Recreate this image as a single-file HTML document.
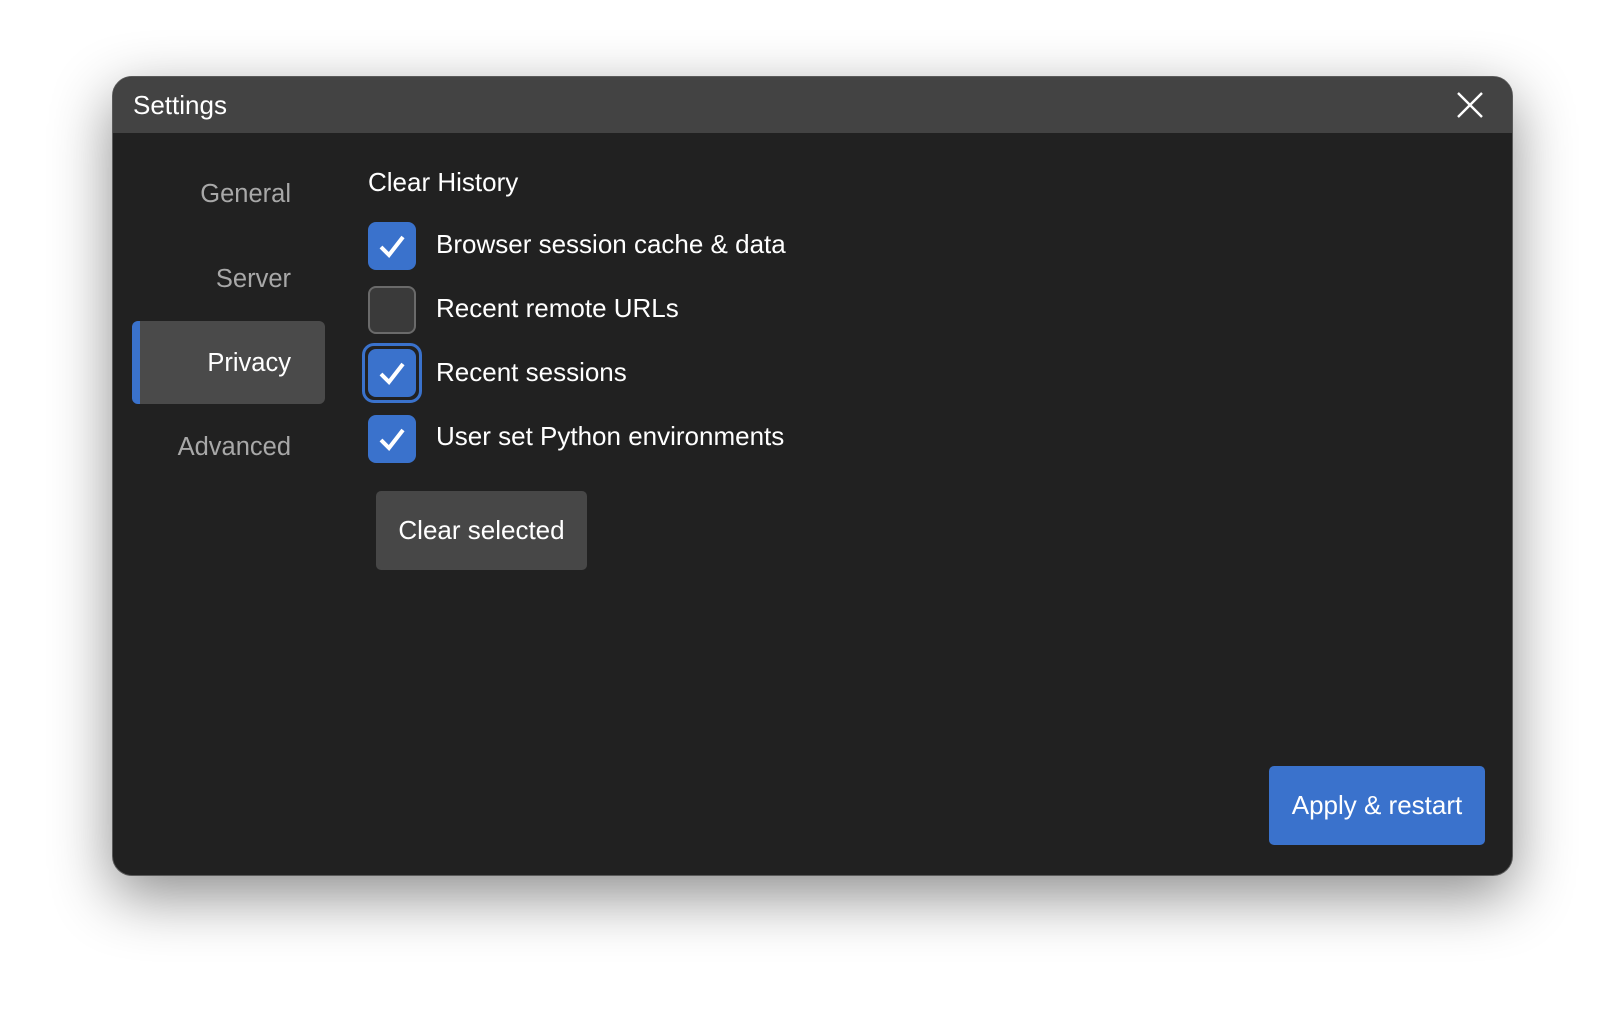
<!DOCTYPE html>
<html><head><meta charset="utf-8"><style>
*{box-sizing:border-box;margin:0;padding:0}
body{width:1624px;height:1024px;background:#fff;font-family:"Liberation Sans",Arial,sans-serif;position:relative;overflow:hidden}
.win{position:absolute;left:112px;top:76px;width:1401px;height:800px;background:#212121;border-radius:20px;border:1.5px solid #5a5a5a;box-shadow:0 20px 60px rgba(0,0,0,.45);overflow:hidden}
.title{position:absolute;left:0;top:0;right:0;height:56px;background:#434343}
.title span{position:absolute;left:20px;top:13px;font-size:26px;color:#fff}
.x{position:absolute;left:1343px;top:14px}
.nav{position:absolute;font-size:25.5px;color:#a8a8a8;text-align:right;width:170px;left:8px}
.sel{position:absolute;left:19px;top:244px;width:193px;height:83px;background:#4a4a4a;border-radius:6px;border-left:8px solid #3a72cc}
.h{position:absolute;left:255px;top:90px;font-size:26px;color:#fff}
.cb{position:absolute;left:255px;width:48px;height:48px;border-radius:8px;background:#3a72cc}
.cb.off{background:#3a3a3a;border:2px solid #6a6a6a}
.cb svg{position:absolute;left:10px;top:11px}
.ring{position:absolute;left:249px;width:60px;height:60px;border:3px solid #3a72cc;border-radius:12px}
.lbl{position:absolute;left:323px;font-size:26px;color:#fff}
.btn{position:absolute;background:#474747;color:#fff;font-size:26px;border-radius:5px;display:flex;align-items:center;justify-content:center}
</style></head><body>
<div class="win">
<div class="title"><span>Settings</span>
<svg class="x" width="28" height="28" viewBox="0 0 28 28"><path d="M2 2L26 26M26 2L2 26" stroke="#fff" stroke-width="2.4"/></svg></div>
<div class="nav" style="top:103px">General</div>
<div class="nav" style="top:188px">Server</div>
<div class="sel"></div>
<div class="nav" style="top:272px;color:#fff">Privacy</div>
<div class="nav" style="top:356px">Advanced</div>
<div class="h">Clear History</div>
<div class="cb" style="top:145px"><svg width="28" height="26" viewBox="0 0 28 26"><path d="M3 14L11 22L25 4" stroke="#fff" stroke-width="4" fill="none"/></svg></div>
<div class="lbl" style="top:152px">Browser session cache &amp; data</div>
<div class="cb off" style="top:209px"></div>
<div class="lbl" style="top:216px">Recent remote URLs</div>
<div class="ring" style="top:266px"></div>
<div class="cb" style="top:272px"><svg width="28" height="26" viewBox="0 0 28 26"><path d="M3 14L11 22L25 4" stroke="#fff" stroke-width="4" fill="none"/></svg></div>
<div class="lbl" style="top:280px">Recent sessions</div>
<div class="cb" style="top:338px"><svg width="28" height="26" viewBox="0 0 28 26"><path d="M3 14L11 22L25 4" stroke="#fff" stroke-width="4" fill="none"/></svg></div>
<div class="lbl" style="top:344px">User set Python environments</div>
<div class="btn" style="left:263px;top:414px;width:211px;height:79px">Clear selected</div>
<div class="btn" style="left:1156px;top:689px;width:216px;height:79px;background:#3a72cc">Apply &amp; restart</div>
</div>
</body></html>
